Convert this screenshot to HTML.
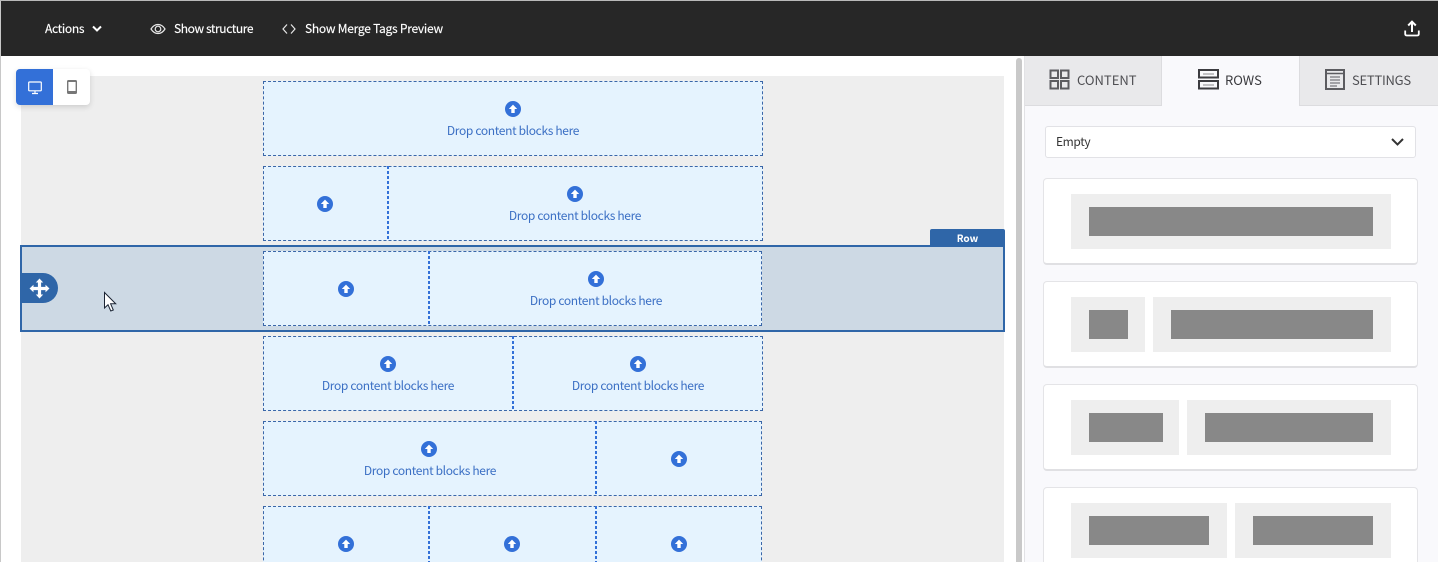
<!DOCTYPE html>
<html><head><meta charset="utf-8">
<style>
html,body{margin:0;padding:0;width:1438px;height:562px;overflow:hidden;background:#fff}
body{position:relative;font-family:"Noto Sans CJK SC","Liberation Sans",sans-serif;font-size:12px}
.a{position:absolute;box-sizing:border-box}
.t{position:absolute;white-space:nowrap;line-height:16px}
.top{color:#fff;font-size:12px;top:21px;letter-spacing:-.3px;-webkit-text-stroke:.15px #fff}
.dz{position:absolute;box-sizing:border-box;background:#e5f3fe;border:1px dashed #3a66a8}
.dv{position:absolute;width:2px;height:75px;background:repeating-linear-gradient(to bottom,#3370d8 0,#3370d8 3px,transparent 3px,transparent 5px)}
.lb{position:absolute;color:#3b6fc4;font-size:12px;line-height:16px;white-space:nowrap;width:200px;text-align:center;letter-spacing:-.34px}
.up{position:absolute;width:16px;height:16px}
.card{position:absolute;left:1043px;width:375px;height:87px;box-sizing:border-box;background:#fff;border:1px solid #e4e4e7;border-bottom:2px solid #e0e0e3;border-radius:4px}
.g{position:absolute;background:#eeeeee;height:55px}
.b{position:absolute;background:#888888;height:29px}
.tab{position:absolute;top:56px;height:50px;box-sizing:border-box;background:#e9e9eb;border-bottom:1px solid #dcdcdf}
.tl{position:absolute;top:71px;font-size:13px;line-height:18px;color:#4e4e52;white-space:nowrap}
</style></head><body>
<svg width="0" height="0" style="position:absolute"><symbol id="u" viewBox="0 0 16 16"><circle cx="8" cy="8" r="8" fill="#3370d8"/><path d="M8 3.600L12.200 8H9.700V12H6.300V8H3.800Z" fill="#fff"/></symbol></svg>

<!-- left edge -->
<div class="a" style="left:0;top:0;width:1px;height:562px;background:#c8c8c8"></div>
<!-- top bar -->
<div class="a" style="left:1px;top:1px;width:1437px;height:55px;background:#272727"></div>
<div class="a" style="left:0;top:0;width:1438px;height:1px;background:#b9b9b9"></div>
<div class="t top" style="left:45px">Actions</div>
<svg class="a" style="left:91px;top:24px" width="12" height="10" viewBox="0 0 12 10"><path d="M2 2.500L6 6.500L10 2.500" fill="none" stroke="#fff" stroke-width="2"/></svg>
<svg class="a" style="left:150px;top:22px" width="16" height="14" viewBox="0 0 16 14"><path d="M1 7C3 3.800 5.300 2.500 8 2.500S13 3.800 15 7C13 10.200 10.700 11.500 8 11.500S3 10.200 1 7Z" fill="none" stroke="#e8e8e8" stroke-width="1.200"/><circle cx="8" cy="7" r="2.800" fill="none" stroke="#e8e8e8" stroke-width="1.200"/></svg>
<div class="t top" style="left:174px;letter-spacing:-.4px">Show structure</div>
<svg class="a" style="left:282px;top:23px" width="14" height="12" viewBox="0 0 14 12"><path d="M5 1.500L1 6L5 10.500M9 1.500L13 6L9 10.500" fill="none" stroke="#e8e8e8" stroke-width="1.200"/></svg>
<div class="t top" style="left:305px;letter-spacing:-.25px">Show Merge Tags Preview</div>
<svg class="a" style="left:1404px;top:20px" width="16" height="17" viewBox="0 0 16 17"><path d="M8 12V2M4.200 5.500L8 1.700L11.800 5.500" fill="none" stroke="#fff" stroke-width="2"/><path d="M1.200 10.500V14C1.200 15 2 15.500 3 15.500H13C14 15.500 14.800 15 14.800 14V10.500" fill="none" stroke="#fff" stroke-width="1.800"/></svg>

<!-- canvas -->
<div class="a" style="left:21px;top:76px;width:983px;height:486px;background:#eeeeee"></div>

<!-- view toggle -->
<div class="a" style="left:16px;top:69px;width:74px;height:36px;background:#fff;border-radius:4px;box-shadow:0 2px 6px rgba(0,0,0,.14)"></div>
<div class="a" style="left:16px;top:69px;width:37px;height:36px;background:#3370d8;border-radius:4px 0 0 4px"></div>
<svg class="a" style="left:27px;top:80px" width="16" height="15" viewBox="0 0 16 15"><rect x="1.700" y="2" width="12.600" height="8.800" rx=".8" fill="none" stroke="#fff" stroke-width="1.200"/><path d="M8 11V13M5 13.500H11" stroke="#fff" stroke-width="1.200" fill="none"/></svg>
<svg class="a" style="left:65px;top:79px" width="14" height="16" viewBox="0 0 14 16"><rect x="2" y="1" width="10" height="14" rx="1.500" fill="#777"/><rect x="3.400" y="3" width="7.200" height="9" fill="#fff"/></svg>

<!-- rows -->
<div class="dz" style="left:263px;top:81px;width:500px;height:75px"></div>
<div class="dz" style="left:263px;top:166px;width:500px;height:75px"></div>
<div class="dv" style="left:387px;top:166px"></div>

<!-- selected row -->
<div class="a" style="left:20px;top:245px;width:985px;height:87px;background:#cdd9e4;border:2px solid #2f66a8"></div>
<div class="a" style="left:930px;top:229px;width:75px;height:17px;background:#2f66a8;border-radius:2px 2px 0 0;color:#fff;font-size:10px;font-weight:bold;line-height:17px;text-align:center;padding-left:0">Row</div>
<div class="a" style="left:22px;top:273px;width:36px;height:30px;background:#2f66a8;border-radius:0 15px 15px 0"></div>
<svg class="a" style="left:29px;top:278px" width="21" height="21" viewBox="0 0 21 21"><path d="M10.500 .5L14.200 4.500H12.100V8.900H16.500V6.800L20.500 10.500L16.500 14.200V12.100H12.100V16.500H14.200L10.500 20.500L6.800 16.500H8.900V12.100H4.500V14.200L.5 10.500L4.500 6.800V8.900H8.900V4.500H6.800Z" fill="#fff"/></svg>
<div class="dz" style="left:263px;top:251px;width:499px;height:75px"></div>
<div class="dv" style="left:428px;top:251px"></div>
<svg class="a" style="left:103px;top:291px" width="15" height="22" viewBox="0 0 15 22"><path d="M1.500 1.500V17L5 13.700L7.800 20L10.300 19L7.600 12.800H12.700Z" fill="#fff" stroke="#1b2433" stroke-width="1"/></svg>

<div class="dz" style="left:263px;top:336px;width:500px;height:75px"></div>
<div class="dv" style="left:512px;top:336px"></div>
<div class="dz" style="left:263px;top:421px;width:499px;height:75px"></div>
<div class="dv" style="left:595px;top:421px"></div>
<div class="dz" style="left:263px;top:506px;width:499px;height:75px"></div>
<div class="dv" style="left:428px;top:506px"></div>
<div class="dv" style="left:595px;top:506px"></div>

<!-- icons -->
<svg class="up" style="left:505px;top:101px"><use href="#u"/></svg>
<svg class="up" style="left:317px;top:196px"><use href="#u"/></svg>
<svg class="up" style="left:567px;top:186px"><use href="#u"/></svg>
<svg class="up" style="left:338px;top:281px"><use href="#u"/></svg>
<svg class="up" style="left:588px;top:271px"><use href="#u"/></svg>
<svg class="up" style="left:380px;top:356px"><use href="#u"/></svg>
<svg class="up" style="left:630px;top:356px"><use href="#u"/></svg>
<svg class="up" style="left:421px;top:441px"><use href="#u"/></svg>
<svg class="up" style="left:671px;top:451px"><use href="#u"/></svg>
<svg class="up" style="left:338px;top:536px"><use href="#u"/></svg>
<svg class="up" style="left:504px;top:536px"><use href="#u"/></svg>
<svg class="up" style="left:671px;top:536px"><use href="#u"/></svg>

<!-- labels -->
<div class="lb" style="left:413px;top:123px">Drop content blocks here</div>
<div class="lb" style="left:475px;top:208px">Drop content blocks here</div>
<div class="lb" style="left:496px;top:293px">Drop content blocks here</div>
<div class="lb" style="left:288px;top:378px">Drop content blocks here</div>
<div class="lb" style="left:538px;top:378px">Drop content blocks here</div>
<div class="lb" style="left:330px;top:463px">Drop content blocks here</div>

<!-- scrollbar -->
<div class="a" style="left:1016px;top:58px;width:6px;height:504px;background:#c9c9c9;border-radius:3px 3px 0 0"></div>

<!-- right panel -->
<div class="a" style="left:1024px;top:56px;width:414px;height:506px;background:#f9f9fc"></div>
<div class="a" style="left:1024px;top:56px;width:1px;height:506px;background:#e2e2e5"></div>
<div class="tab" style="left:1025px;width:137px;border-right:1px solid #dcdcdf"></div>
<div class="tab" style="left:1299px;width:139px;border-left:1px solid #dcdcdf"></div>

<svg class="a" style="left:1049px;top:69px" width="21" height="21" viewBox="0 0 21 21"><g fill="none" stroke="#5c5c60" stroke-width="2"><rect x="1.500" y="1.500" width="7.500" height="7.500"/><rect x="12" y="1.500" width="7.500" height="7.500"/><rect x="1.500" y="12" width="7.500" height="7.500"/><rect x="12" y="12" width="7.500" height="7.500"/></g></svg>
<div class="tl" style="left:1077px">CONTENT</div>
<svg class="a" style="left:1198px;top:69px" width="21" height="21" viewBox="0 0 21 21"><g fill="none" stroke="#3c3c40" stroke-width="2"><rect x="1" y="1" width="19" height="7.500"/><rect x="1" y="12" width="19" height="7.500"/></g><path d="M5 5H16M5 16H16" stroke="#8a8a8e" stroke-width="1"/></svg>
<div class="tl" style="left:1225px;color:#3a3a3e">ROWS</div>
<svg class="a" style="left:1325px;top:69px" width="20" height="21" viewBox="0 0 20 21"><rect x="1" y="1" width="18" height="19" fill="none" stroke="#5c5c60" stroke-width="2"/><path d="M1 4.500H19" stroke="#5c5c60" stroke-width="1.500"/><path d="M5 8H15M5 11H15M5 14H15M5 17H12" stroke="#5c5c60" stroke-width="1"/></svg>
<div class="tl" style="left:1352px;letter-spacing:-.25px">SETTINGS</div>

<!-- select -->
<div class="a" style="left:1045px;top:126px;width:371px;height:32px;background:#fff;border:1px solid #e2e2e6;border-radius:3px"></div>
<div class="t" style="left:1056px;top:134px;color:#333;font-size:12px;letter-spacing:-.4px">Empty</div>
<svg class="a" style="left:1390px;top:136px" width="15" height="12" viewBox="0 0 15 12"><path d="M2 3L7.500 8.500L13 3" fill="none" stroke="#333" stroke-width="2"/></svg>

<!-- cards -->
<div class="card" style="top:178px"></div>
<div class="g" style="left:1071px;top:194px;width:320px"></div>
<div class="b" style="left:1089px;top:207px;width:284px"></div>

<div class="card" style="top:281px"></div>
<div class="g" style="left:1071px;top:297px;width:74px"></div>
<div class="b" style="left:1089px;top:310px;width:39px"></div>
<div class="g" style="left:1153px;top:297px;width:238px"></div>
<div class="b" style="left:1171px;top:310px;width:202px"></div>

<div class="card" style="top:384px"></div>
<div class="g" style="left:1071px;top:400px;width:108px"></div>
<div class="b" style="left:1089px;top:413px;width:74px"></div>
<div class="g" style="left:1187px;top:400px;width:204px"></div>
<div class="b" style="left:1205px;top:413px;width:168px"></div>

<div class="card" style="top:487px"></div>
<div class="g" style="left:1071px;top:503px;width:156px"></div>
<div class="b" style="left:1089px;top:516px;width:120px"></div>
<div class="g" style="left:1235px;top:503px;width:156px"></div>
<div class="b" style="left:1253px;top:516px;width:120px"></div>
</body></html>
